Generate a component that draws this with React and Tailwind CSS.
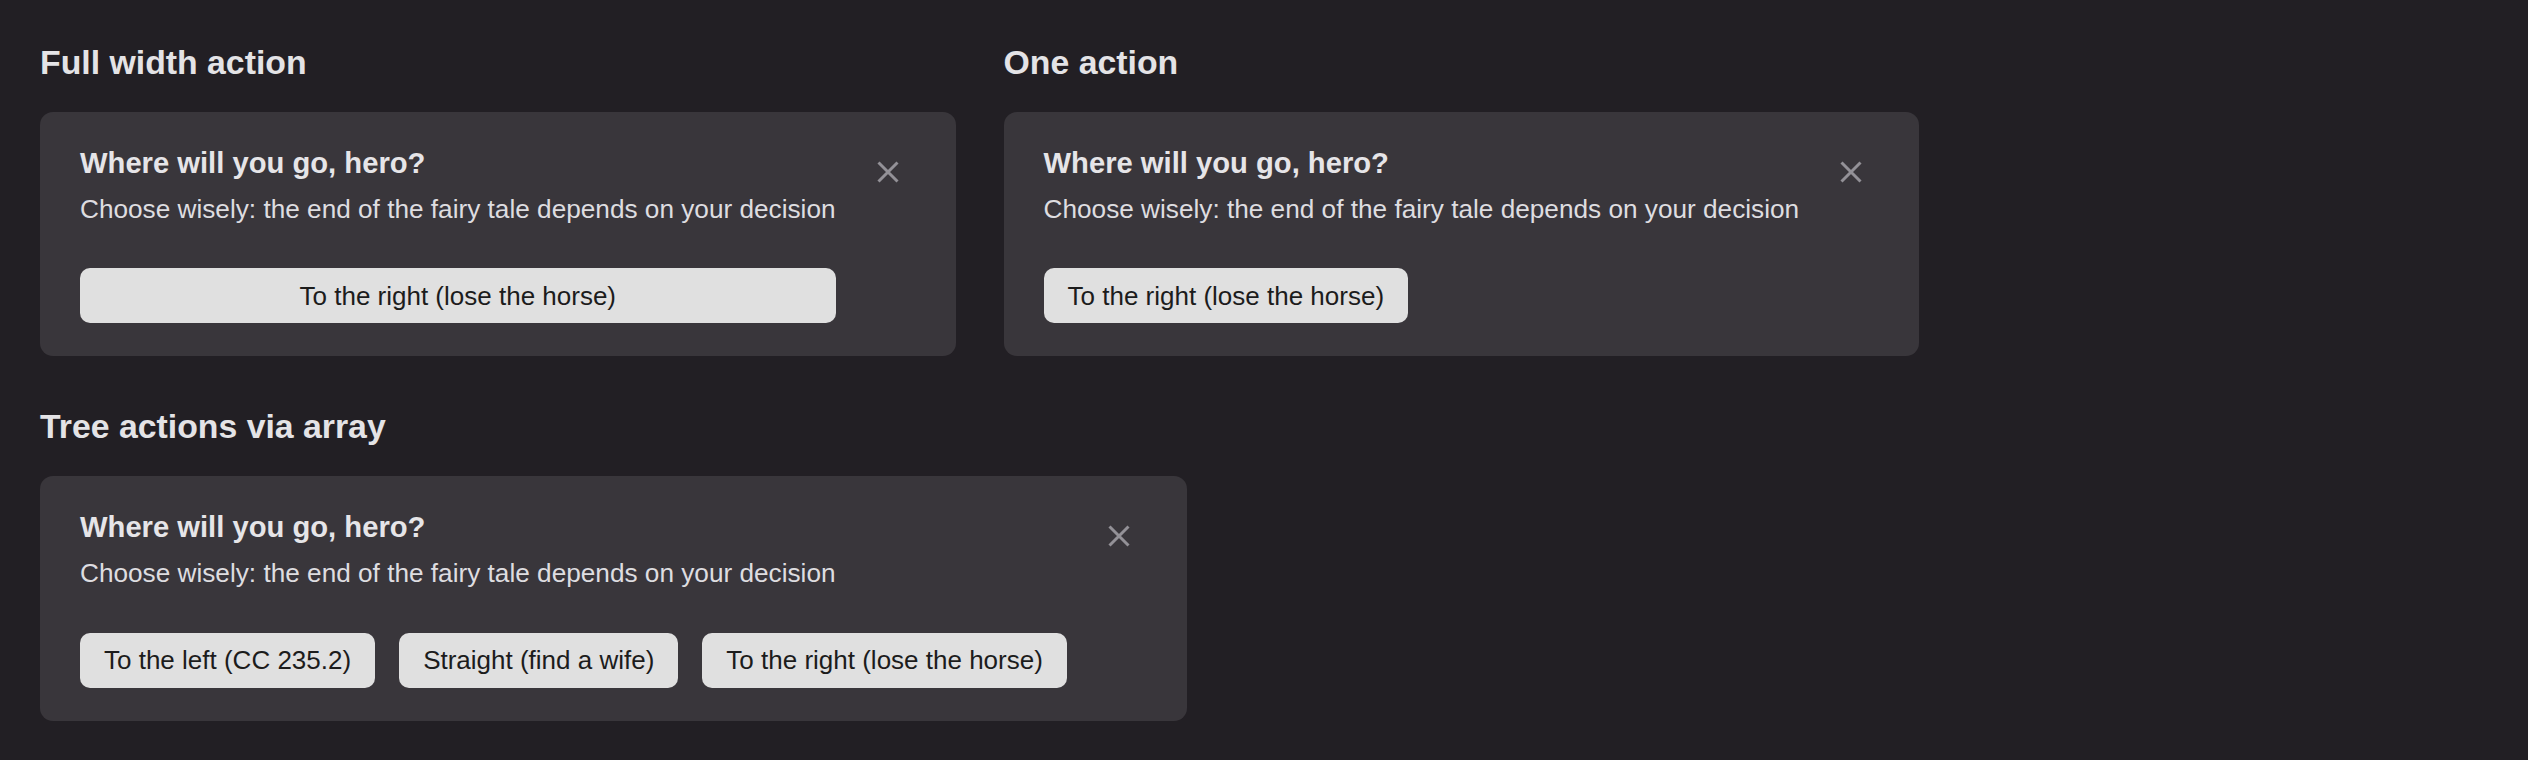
import React from "react";

function CloseIcon() {
  return (
    <button className="w-[56px] h-[56px] flex items-center justify-center shrink-0 text-[#939197]">
      <svg width="22" height="22" viewBox="0 0 22 22" fill="none">
        <path d="M1.5 1.5L20.5 20.5M20.5 1.5L1.5 20.5" stroke="currentColor" strokeWidth="3" />
      </svg>
    </button>
  );
}

function ActionButton({ children, full }) {
  return (
    <button
      className={
        (full ? "w-full " : "") +
        "h-[55px] px-[24px] rounded-[10px] bg-[#e0e0e0] text-[#1c1c1c] text-[26px] leading-[30px] whitespace-nowrap"
      }
    >
      {children}
    </button>
  );
}

function Card({ actions, full }) {
  return (
    <div className="inline-flex items-start gap-[24px] bg-[#39363b] rounded-[13px] pl-[40px] pr-[40px] pt-[32px] pb-[33px]">
      <div className="flex flex-col">
        <div className="text-[29.2px] leading-[38px] font-bold text-[#e6e5e8]">Where will you go, hero?</div>
        <div className="mt-[8px] text-[26.2px] leading-[38.4px] text-[#dedde0] whitespace-nowrap">
          Choose wisely: the end of the fairy tale depends on your decision
        </div>
        <div className="mt-[40px] flex gap-[24px]">
          {actions.map((a) => (
            <ActionButton key={a} full={full}>
              {a}
            </ActionButton>
          ))}
        </div>
      </div>
      <CloseIcon />
    </div>
  );
}

function Section({ title, children }) {
  return (
    <div className="flex flex-col items-start">
      <h2 className="text-[33.8px] leading-[38px] font-bold text-[#e4e3e6] mb-[31px]">{title}</h2>
      {children}
    </div>
  );
}

export default function App() {
  return (
    <div
      className="min-h-[760px] w-full bg-[#221f24] px-[40px] pt-[43px]"
      style={{ fontFamily: '"Liberation Sans", Arial, sans-serif' }}
    >
      <div className="flex items-start gap-[48px]">
        <Section title="Full width action">
          <Card actions={["To the right (lose the horse)"]} full />
        </Section>
        <Section title="One action">
          <Card actions={["To the right (lose the horse)"]} />
        </Section>
      </div>
      <div className="mt-[51px]">
        <Section title="Tree actions via array">
          <Card actions={["To the left (CC 235.2)", "Straight (find a wife)", "To the right (lose the horse)"]} />
        </Section>
      </div>
    </div>
  );
}
